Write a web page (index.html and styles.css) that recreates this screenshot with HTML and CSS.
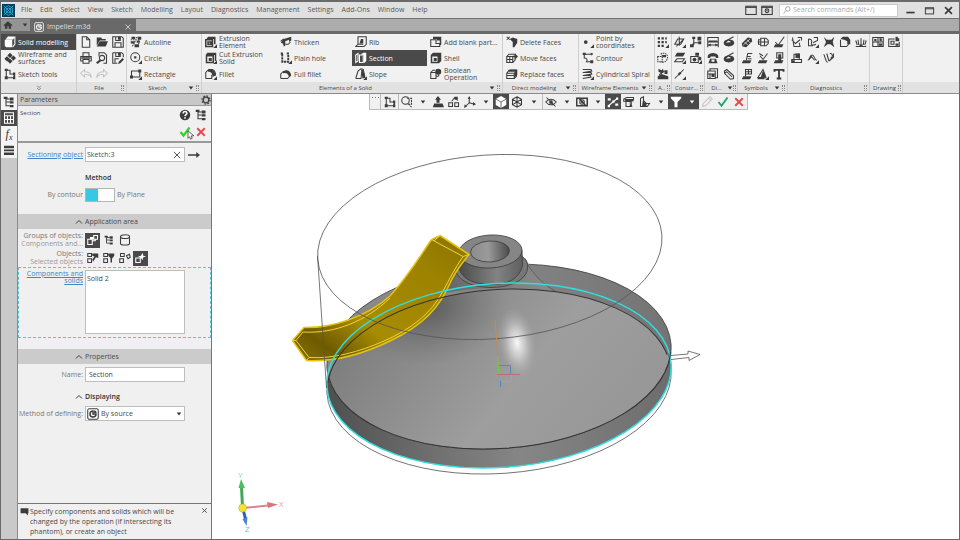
FILE: index.html
```html
<!DOCTYPE html>
<html lang="en">
<head>
<meta charset="utf-8">
<title>Impeller.m3d</title>
<link rel="stylesheet" href="styles.css">
</head>
<body>
<svg class="defs" aria-hidden="true">
  <symbol id="logo" viewBox="0 0 16 16"><rect class="logo-bg" width="16" height="16"/><path class="logo-line" d="M8 2l5 3v6l-5 3-5-3V5zM2 2l12 12M14 2L2 14M8 5a3 3 0 100 6 3 3 0 000-6z"/></symbol>
  <symbol id="home" viewBox="0 0 16 16"><path class="f" d="M1 8l7-6 7 6v1h-2v5h-4v-4H7v4H3V9H1z"/></symbol>
  <symbol id="doc" viewBox="0 0 16 16"><rect x="1" y="1" width="14" height="14" rx="2"/><path d="M8 4a4 4 0 104 4H8z" stroke-width="2"/><path class="f" d="M9.500 3v3.500H13A4 4 0 009.500 3z"/></symbol>
  <symbol id="caret" viewBox="0 0 8 8"><path class="f" d="M1 2h6L4 6z"/></symbol>
  <symbol id="x" viewBox="0 0 16 16"><path d="M3 3l10 10M13 3L3 13"/></symbol>
  <symbol id="check" viewBox="0 0 16 16"><path d="M2 8l4 5 8-11"/></symbol>
  <symbol id="win" viewBox="0 0 16 16"><rect x="1" y="3" width="14" height="11"/><path d="M1 4.500h14"/></symbol>
  <symbol id="wincam" viewBox="0 0 16 16"><rect x="1" y="3" width="14" height="11"/><path d="M1 4.500h14"/><circle cx="8" cy="9" r="2.500"/><circle class="f" cx="8" cy="9" r="1"/></symbol>
  <symbol id="max" viewBox="0 0 16 16"><rect x="2" y="4" width="12" height="9"/><path d="M2 5.500h12"/></symbol>
  <symbol id="min" viewBox="0 0 16 16"><path d="M2 11h12"/></symbol>
  <symbol id="search" viewBox="0 0 16 16"><circle cx="9.500" cy="6" r="4.500"/><path d="M6 9l-5 6"/></symbol>
  <symbol id="solid" viewBox="0 0 16 16"><path d="M5 1.500h9.500V11l-3 3.500"/><path class="f" d="M1 5h10v10H3l-2-2zM5 1l-3 3.500h10l2.500-3z"/></symbol>
  <symbol id="wire" viewBox="0 0 16 16"><path class="f" d="M8 1l3.500 3.500L8 8 4.500 4.500zM12.500 4.500L16 8l-3.500 3.500L9 8zM4 5.500L7.500 9 4 12.500.500 9zM8 9l3.500 3L8 15.500 4.500 12z"/></symbol>
  <symbol id="sk" viewBox="0 0 16 16"><path d="M3 2v11h11V8H8V3H3"/><path class="f" d="M1 1h4v3H1zM1 11h4v4H1zM12 6h3v4h-3zM12 11h3v4h-3z"/></symbol>
  <symbol id="more" viewBox="0 0 16 16"><path d="M3 2l5 5 5-5M3 8l5 5 5-5"/></symbol>
  <symbol id="new" viewBox="0 0 16 16"><path d="M3 1h6l4 4v10H3zM9 1v4h4"/></symbol>
  <symbol id="open" viewBox="0 0 16 16"><path class="f" d="M1 2h6l1 2h5v2H5l-4 7zM5 7h11l-3 7H1z"/></symbol>
  <symbol id="save" viewBox="0 0 16 16"><path d="M1 1h12l2 2v12H1zM4 15V9h8v6M5 1v5h6V1"/><path class="f" d="M8 1h3v4H8z"/></symbol>
  <symbol id="saveas" viewBox="0 0 16 16"><path d="M1 1h12l2 2v4M7 15H1V1M4 14V9h5M5 1v5h6V1"/><path class="f" d="M8 1h3v4H8zM8 16l1-3 5-5 2 2-5 5z"/></symbol>
  <symbol id="print" viewBox="0 0 16 16"><path d="M4 6V1h8v5M4 12H1V6h14v6h-3M4 10h8v5H4z"/><path class="f" d="M2 7h12v2H2z"/></symbol>
  <symbol id="preview" viewBox="0 0 16 16"><path d="M4 6V1h7l3 3v11h-4"/><circle cx="8" cy="8" r="3.500"/><path class="f" d="M5 10l2 2-5 4-2-2z"/></symbol>
  <symbol id="undo" viewBox="0 0 16 16"><path d="M6 2L1 7l5 5V9c5-1 8 1 9 4 0-6-4-8-9-8z"/></symbol>
  <symbol id="redo" viewBox="0 0 16 16"><path d="M10 2l5 5-5 5V9c-5-1-8 1-9 4 0-6 4-8 9-8z"/></symbol>
  <symbol id="autoline" viewBox="0 0 16 16"><path d="M1 5h7L3 14M8 2c4 1 5 4 3 12" stroke-dasharray="2 1"/><path class="f" d="M2 1h5v3H2zM10 1h5v4h-4zM1 7h5v3H1zM6 11h6v4H6zM9 6h4v3H9z"/></symbol>
  <symbol id="circle" viewBox="0 0 16 16"><circle cx="7" cy="7" r="6"/><path class="f" d="M5.500 5.500h3v3h-3zM16 11v5h-5z"/></symbol>
  <symbol id="rect" viewBox="0 0 16 16"><path d="M2 4h11v8H2z"/><path class="f" d="M11 2h4v4h-4zM0 10h4v4H0zM16 11v5h-5z"/></symbol>
  <symbol id="extr" viewBox="0 0 16 16"><path class="f" d="M4 1h10v10h-2V4H2z"/><path d="M1 5h9v9H1zM4 8h4v3H4z" stroke-width="2"/><path class="f" d="M16 11v5h-5z"/></symbol>
  <symbol id="cut" viewBox="0 0 16 16"><path class="f" fill-rule="evenodd" d="M3 1h12v11h-2V4H1zM1 4h11v11H1zM3 6v7h7V6z"/><path class="f" d="M5 8h4v4H5zM16 11v5h-5z"/></symbol>
  <symbol id="fillet" viewBox="0 0 16 16"><path d="M1 14V6l4-4h4c4 0 5 4 5 8M1 14h8V9"/><path class="f" d="M4 3c3-3 9-2 10 7l-4 2C10 8 9 5 4 5zM16 11v5h-5z"/></symbol>
  <symbol id="thick" viewBox="0 0 16 16"><path class="f" d="M5 4l10-3v5l-3 2V5L7 7v6l-2 1-1-4-3-1z"/><path d="M1 7l4-3M7 11h4l3-3"/></symbol>
  <symbol id="hole" viewBox="0 0 16 16"><path d="M1 2h4M9 2h4M3 3v10h8V3" stroke-width="2.500" stroke-dasharray="3 1"/><path class="f" d="M16 11v5h-5z"/></symbol>
  <symbol id="ffillet" viewBox="0 0 16 16"><path d="M1 14V8l4-4M1 14h9l4-4"/><path class="f" d="M4 5c4-4 10-2 11 5l-3 2C11 8 9 6 4 7z"/></symbol>
  <symbol id="rib" viewBox="0 0 16 16"><path d="M4 1h11v10l-3 3H1l3-3zM1 14h11M4 11h7"/><path class="f" d="M8 4h3v6H6z"/></symbol>
  <symbol id="section" viewBox="0 0 16 16"><path d="M1 4l3-2v10l-3 2zM6 4h5v10H6z"/><path class="f" d="M8 3l3-2h4v11l-3 3V4z"/></symbol>
  <symbol id="slope" viewBox="0 0 16 16"><path d="M1 14L4 4l4-3 3 1 2 9M1 14h7l1-9"/><path class="f" d="M8 2l3 1 3 10-4 1zM16 11v5h-5z"/></symbol>
  <symbol id="blank" viewBox="0 0 16 16"><path d="M1 5h7v5h5v4H1z"/><path class="f" d="M4 1h11v11h-2V6H9V4H4z"/></symbol>
  <symbol id="shell" viewBox="0 0 16 16"><path class="f" fill-rule="evenodd" d="M4 1h11v11l-3 3H1V4zM3 6v7h7V6z"/><path class="f" d="M5 8h4v4H5z"/></symbol>
  <symbol id="bool" viewBox="0 0 16 16"><path d="M1 6h7v8H1zM8 11h3l1-2M1 6l3-3h3"/><circle class="f" cx="11" cy="5" r="4"/></symbol>
  <symbol id="delf" viewBox="0 0 16 16"><path class="f" d="M5 4l4-2 6 2v5l-4 6H9V8z"/><path d="M1 1l4 4M5 1L1 5"/></symbol>
  <symbol id="movef" viewBox="0 0 16 16"><path d="M1 6h8v8H1zM1 10h8M5 6v8M1 6l3-3h8v8l-3 3"/><path class="f" d="M12 2l4 4-4 4V7H9V5h3z"/></symbol>
  <symbol id="repf" viewBox="0 0 16 16"><path d="M1 7h10v7H1zM1 10h10M1 7l3-4h10v8l-3 3"/><path class="f" d="M5 2h10v3H3zM11 6l4-3v6l-4 4z"/></symbol>
  <symbol id="point" viewBox="0 0 16 16"><circle class="f" cx="5" cy="8" r="2.500"/><path class="f" d="M16 11v5h-5z"/></symbol>
  <symbol id="contour" viewBox="0 0 16 16"><path d="M3 3h9M3 3v5c3 0 5 2 3 5h7"/><path class="f" d="M1 1h4v3H1zM11 1l4 1-2 3zM11 11h4v4h-4z"/></symbol>
  <symbol id="spiral" viewBox="0 0 16 16"><path d="M1 2h11l1 2-11 2M1 6h11l1 2-11 2M1 10h10l1 2-11 2"/><path class="f" d="M16 11v5h-5z"/></symbol>
  <symbol id="dots" viewBox="0 0 16 16"><path d="M1 3h12M1 8h12M1 13h9" stroke-width="3" stroke-dasharray="3 2"/><path class="f" d="M16 11v5h-5z"/></symbol>
  <symbol id="asel" viewBox="0 0 16 16"><path d="M5 3c4-3 9-1 9 4s-5 8-9 6" stroke-dasharray="2 1"/><path d="M1 6h6v7H1z" stroke-dasharray="2 1"/><path class="f" d="M6 4h6v3H8z"/></symbol>
  <symbol id="acog" viewBox="0 0 16 16"><path class="f" d="M2 1l4 2 2-2 1 4-3 2-4-2zM10 3h4v5h-4zM1 11l5-3 9 3v4H1z"/><path d="M3 9l7-5"/></symbol>
  <symbol id="plane" viewBox="0 0 16 16"><path d="M1 11l4-7h8l-4 7zM7 1v12M3 14L13 4"/><path class="f" d="M16 11v5h-5z"/></symbol>
  <symbol id="lcs" viewBox="0 0 16 16"><path d="M5 12V2M5 9h8M5 9l-3 5"/><path class="f" d="M10 1h5v5h-5zM3 1h4v3H3zM11 7h4v4h-4zM0 11h5v4H0z"/></symbol>
  <symbol id="offp" viewBox="0 0 16 16"><path class="f" d="M4 1h11l-3 5H1z"/><path d="M4 9h10l-3 4H1z"/><path class="f" d="M16 11v5h-5z"/></symbol>
  <symbol id="ccam" viewBox="0 0 16 16"><path d="M1 6h10v8H1z"/><circle class="f" cx="6" cy="10" r="2.500"/><path class="f" d="M7 1h5v5l3 1v4h-3V5H7zM16 11v5h-5z"/></symbol>
  <symbol id="axis" viewBox="0 0 16 16"><path d="M1 14L13 2"/><path class="f" d="M5 8l3-3 2 2-3 3zM16 11v5h-5z"/></symbol>
  <symbol id="dim" viewBox="0 0 16 16"><path d="M1 8v7M15 8v7M1 12h14M1 2h14v6H1z"/><path class="f" d="M1 12l4-2v4zM15 12l-4-2v4zM2 6h12v2H2z"/></symbol>
  <symbol id="disc" viewBox="0 0 16 16"><path class="f" fill-rule="evenodd" d="M1 9c0-6 14-6 14 0s-14 7-14 0zM4 9l7-1-4-2z"/><path d="M5 6l9-5"/></symbol>
  <symbol id="phone" viewBox="0 0 16 16"><path class="f" fill-rule="evenodd" d="M1 5c2-5 12-5 14 0v3h-3l-1-2H5L4 8H1zM4 9h8l2 6H2zM6 10v3h4v-3z"/></symbol>
  <symbol id="tbl" viewBox="0 0 16 16"><path d="M1 4h10v10H1zM4 4V1h10v12h-3M4 7v7M1 8h10"/><path class="f" d="M6 8h4v4H6z"/></symbol>
  <symbol id="clip" viewBox="0 0 16 16"><path d="M2 4l3-2 9 8v4l-4 1L2 7zM5 5l7 7M2 7l3-2"/></symbol>
  <symbol id="bolt" viewBox="0 0 16 16"><path class="f" d="M1 10l8-8 5 1 1 4-8 8-5-1z"/><path class="cutline" d="M5 8l4 4M8 5l4 4M3 12L12 4"/></symbol>
  <symbol id="nut" viewBox="0 0 16 16"><path d="M5 3h7l3 3v4l-3 3H5zM1 8h14M5 5H2v6h3M10 3v10"/></symbol>
  <symbol id="rough" viewBox="0 0 16 16"><path d="M3 8l4 4 8-11"/><path class="f" d="M3 11h11l-2 4H1z"/></symbol>
  <symbol id="base" viewBox="0 0 16 16"><path d="M7 11l2-9h6M8 6h5M9 9h5"/><path class="f" d="M3 11h11l-2 4H1z"/></symbol>
  <symbol id="mark" viewBox="0 0 16 16"><path d="M4 5l4 5 6-8M3 2l5 3"/><path class="f" d="M3 11h11l-2 4H1z"/></symbol>
  <symbol id="stamp" viewBox="0 0 16 16"><path d="M5 1h8v7H5z"/><path class="f" d="M7 3h4v8H7zM3 11h11l-2 4H1z"/></symbol>
  <symbol id="flag" viewBox="0 0 16 16"><path d="M6 11V2h8v6H6M10 2v6M6 5h8"/><path class="f" d="M3 11h11l-2 4H1z"/></symbol>
  <symbol id="tri" viewBox="0 0 16 16"><path d="M8 2L1 13h11zM8 5v6"/><path class="f" d="M7 6h3l2 6H5zM1 12h9v3H1zM16 11v5h-5z"/></symbol>
  <symbol id="T" viewBox="0 0 16 16"><path d="M2 5V2.500h12V5M8 2v11M5 14h6" stroke-width="2.500"/></symbol>
  <symbol id="d1" viewBox="0 0 16 16"><path d="M2 2l2 12h8l-1-5M1 5l5 5 6-5M9 2h5v4"/></symbol>
  <symbol id="d2" viewBox="0 0 16 16"><path d="M2 4c4 0 5 2 4 5s2 4 6 2M9 2h5v4L8 9M2 4v9h6"/><path class="f" d="M16 11v5h-5z"/></symbol>
  <symbol id="d3" viewBox="0 0 16 16"><path class="f" d="M1 1l4 4h6l4-4-2 7 2 7-5-4H6l-5 4 3-7z"/></symbol>
  <symbol id="d4" viewBox="0 0 16 16"><path d="M2 5v9h8l3-3"/><path class="f" d="M2 4l3-3h7l3 4v6h-4V7L7 5z"/></symbol>
  <symbol id="d5" viewBox="0 0 16 16"><path d="M1 14h14M3 12L1 6M13 12l2-6M8 11V3M5 12L4 5M11 12l1-7"/><path class="f" d="M6 11h4v3H6z"/></symbol>
  <symbol id="d6" viewBox="0 0 16 16"><path d="M1 10h13v4H1zM4 10V3h7v7"/><path class="f" d="M6 2h6v6H6zM1 11h4v3H1z"/></symbol>
  <symbol id="d7" viewBox="0 0 16 16"><path d="M1 11c3 0 2-7 6-7 3 0 2 6 6 7M3 10l3-4 4 5"/><path class="f" d="M16 11v5h-5z"/></symbol>
  <symbol id="d8" viewBox="0 0 16 16"><path d="M1 3c2 3 2 9 5 11M5 2c1 4 2 7 3 10M10 8a3 3 0 10-1-6M14 2v5l-6 5"/></symbol>
  <symbol id="dr1" viewBox="0 0 16 16"><path d="M1 2h14v12H1zM8 2v12M1 8h14"/><path class="f" d="M3 4h3v3H3zM10 3h3v4h-3zM9 10h5v3H9z"/></symbol>
  <symbol id="dr2" viewBox="0 0 16 16"><path d="M9 4H1v10h14V8M4 7h4v4H4z"/><path class="f" d="M10 1h3v2h2v4h-5zM10 10h4v3h-4z"/></symbol>
  <symbol id="tree" viewBox="0 0 16 16"><path d="M4 2v11h5M4 4h5M4 8h5"/><path class="f" d="M1 1h5v3H1zM9 2h5v4H9zM9 7h5v3H9zM9 12h5v3H9z"/></symbol>
  <symbol id="form" viewBox="0 0 16 16"><path d="M2 1h12v14H2zM2 5h12M6 5v10M2 10h12M10 5v10"/></symbol>
  <symbol id="bars" viewBox="0 0 16 16"><path class="f" d="M0 1h16v4H0zM0 7h16v3H0zM0 12h16v4H0z"/></symbol>
  <symbol id="gear" viewBox="0 0 16 16"><circle cx="8" cy="8" r="4.500" stroke-width="2"/><circle cx="8" cy="8" r="6.500" stroke-width="2" stroke-dasharray="2.500 2.600"/></symbol>
  <symbol id="help" viewBox="0 0 16 16"><circle class="f" cx="8" cy="8" r="7"/><path class="paper" d="M5.500 6c0-4 5.500-3.500 5 0-.3 1.500-2.500 1.500-2.500 3.500M8 11v2"/></symbol>
  <symbol id="arrow" viewBox="0 0 16 16"><path d="M0 8h13" stroke-width="2"/><path class="f" d="M11 4l5 4-5 4z"/></symbol>
  <symbol id="up" viewBox="0 0 16 16"><path d="M2 11l6-6 6 6"/></symbol>
  <symbol id="g1" viewBox="0 0 16 16"><path d="M1 7h6v7H1zM9 2h5v5H9zM7 9h4V7"/><path class="f" d="M4 4h5v3H4z"/></symbol>
  <symbol id="g3" viewBox="0 0 16 16"><ellipse cx="8" cy="3.500" rx="6" ry="2.500"/><path d="M2 3.500v9c0 3 12 3 12 0v-9"/></symbol>
  <symbol id="o1" viewBox="0 0 16 16"><path d="M1 9h5v5H1zM1 2h5v4H1z"/><path class="f" d="M7 2h8v6l-3-1-4 6-1-3 3-4-3-1z"/></symbol>
  <symbol id="o2" viewBox="0 0 16 16"><path d="M1 9h5v5H1zM1 2h5v4H1z"/><path class="f" d="M7 2h8v3l-3 4v5h-2V8L7 5z"/></symbol>
  <symbol id="o3" viewBox="0 0 16 16"><path d="M1 9h5v5H1zM2 2h5v4H2zM10 5l4-2 1 4-3 2z"/></symbol>
  <symbol id="o4" viewBox="0 0 16 16"><path d="M1 8h6v6H1z"/><path class="f" d="M10 1l1 4 4 1-4 1-1 4-2-3-4-2 4-1z"/></symbol>
  <symbol id="chat" viewBox="0 0 16 16"><path class="f" d="M1 2h14v9h-1v4l-4-4H1z"/></symbol>
  <symbol id="zoomf" viewBox="0 0 16 16"><circle cx="6" cy="6" r="5"/><path d="M8 3h6v8H9M10 10l4 5" stroke-dasharray="3 1"/></symbol>
  <symbol id="norm" viewBox="0 0 16 16"><path class="f" d="M8 0l4 5h-2v4H6V5H4zM3 10h11l2 5H1z"/></symbol>
  <symbol id="orient" viewBox="0 0 16 16"><path d="M1 9h5v5H1zM9 9h5v5H9zM5 7l4-5 4 4"/><path class="f" d="M9 1h4v4H9z"/></symbol>
  <symbol id="triad" viewBox="0 0 16 16"><path d="M7 9V2M7 9l7 2M7 9l-5 5"/><path class="f" d="M5 4l2-4 2 4zM12 8l4 3-4 2zM1 11l3 3-4 2z"/></symbol>
  <symbol id="cube" viewBox="0 0 16 16"><path class="f" d="M8 0l7 4v8l-7 4-7-4V4z"/><path class="darkline" d="M1 4l7 4 7-4M8 8v8"/></symbol>
  <symbol id="wcube" viewBox="0 0 16 16"><path d="M8 1l6 3.500v7L8 15l-6-3.500v-7zM2 4.500L8 8l6-3.500M8 8v7M8 1v7l6 3.500M8 8l-6 3.500"/></symbol>
  <symbol id="eye" viewBox="0 0 16 16"><path d="M1 8c4-5 10-5 14 0-4 5-10 5-14 0zM2 2l12 12"/><circle class="f" cx="8" cy="8" r="2.500"/></symbol>
  <symbol id="eyebox" viewBox="0 0 16 16"><path d="M1 3h14v10H1zM3 2l11 12" stroke-width="2"/><circle cx="8" cy="8" r="3"/><circle class="f" cx="8" cy="8" r="1.500"/></symbol>
  <symbol id="snap" viewBox="0 0 16 16"><path d="M2 13L14 3"/><path class="f" d="M1 3h4v3H1zM7 6h3v3H7zM11 10h4v3h-4zM1 12h3v3H1zM12 2h3v3h-3z"/></symbol>
  <symbol id="hid" viewBox="0 0 16 16"><path d="M1 4l4-2h9v3L9 7H1zM4 7v7h7V8"/><path class="f" d="M2 4h12v3l-4 1v3l3 3H9V8H4z"/></symbol>
  <symbol id="lay" viewBox="0 0 16 16"><path d="M2 14V3l4-2v9h8l-3 4zM6 6l4 4"/><path class="f" d="M5 7l5 3v4H4z"/></symbol>
  <symbol id="filter" viewBox="0 0 16 16"><path class="f" d="M1 1h14v2l-5 5v7H6V8L1 3z"/></symbol>
  <symbol id="pip" viewBox="0 0 16 16"><path d="M2 14l1-4 7-7 3 3-7 7zM10 3l2-2 3 3-2 2"/></symbol>
</svg>

<div class="app">
  <header class="titlebar">
    <svg class="logo"><use href="#logo"/></svg>
    <nav class="menu" aria-label="Main menu">
      <a href="#">File</a><a href="#">Edit</a><a href="#">Select</a><a href="#">View</a><a href="#">Sketch</a><a href="#">Modelling</a><a href="#">Layout</a><a href="#">Diagnostics</a><a href="#">Management</a><a href="#">Settings</a><a href="#">Add-Ons</a><a href="#">Window</a><a href="#">Help</a>
    </nav>
    <button class="winbtn" aria-label="Window layout"><svg class="ic"><use href="#win"/></svg></button>
    <button class="winbtn" aria-label="Screen view"><svg class="ic"><use href="#wincam"/></svg></button>
    <label class="search"><svg class="ic"><use href="#search"/></svg><input type="text" placeholder="Search commands (Alt+/)" aria-label="Search commands"></label>
    <div class="wincontrols">
      <button aria-label="Minimize"><svg class="ic bold"><use href="#min"/></svg></button>
      <button aria-label="Maximize"><svg class="ic"><use href="#max"/></svg></button>
      <button aria-label="Close"><svg class="ic bold small"><use href="#x"/></svg></button>
    </div>
  </header>

  <div class="tabs">
    <button class="homebtn" aria-label="Home"><svg class="ic"><use href="#home"/></svg><svg class="caret"><use href="#caret"/></svg></button>
    <div class="tab"><svg class="ic"><use href="#doc"/></svg><span>Impeller.m3d</span><button aria-label="Close tab"><svg class="ic small"><use href="#x"/></svg></button></div>
  </div>

  <div class="ribbon">
    <section class="group modes">
      <div class="cmds">
        <button class="cmd on"><svg class="ic"><use href="#solid"/></svg><span>Solid modelling</span></button>
        <button class="cmd"><svg class="ic"><use href="#wire"/></svg><span>Wireframe and surfaces</span></button>
        <button class="cmd"><svg class="ic"><use href="#sk"/></svg><span>Sketch tools</span></button>
      </div>
      <footer><svg class="ic more"><use href="#more"/></svg></footer>
    </section>
    <section class="group file">
      <div class="tools c3">
        <button aria-label="New"><svg class="ic"><use href="#new"/></svg></button><button aria-label="Open"><svg class="ic"><use href="#open"/></svg></button><button aria-label="Save"><svg class="ic"><use href="#save"/></svg></button>
        <button aria-label="Print"><svg class="ic"><use href="#print"/></svg></button><button aria-label="Preview"><svg class="ic"><use href="#preview"/></svg></button><button aria-label="Save as"><svg class="ic"><use href="#saveas"/></svg></button>
        <button aria-label="Undo" disabled><svg class="ic"><use href="#undo"/></svg></button><button aria-label="Redo" disabled><svg class="ic"><use href="#redo"/></svg></button>
      </div>
      <footer><span>File</span><i class="grip"></i></footer>
    </section>
    <section class="group sketch">
      <div class="cmds">
        <button class="cmd"><svg class="ic"><use href="#autoline"/></svg><span>Autoline</span></button>
        <button class="cmd"><svg class="ic"><use href="#circle"/></svg><span>Circle</span></button>
        <button class="cmd"><svg class="ic"><use href="#rect"/></svg><span>Rectangle</span></button>
      </div>
      <footer><span>Sketch</span><svg class="caret"><use href="#caret"/></svg><i class="grip"></i></footer>
    </section>
    <section class="group elements">
      <div class="cmds c4">
        <button class="cmd"><svg class="ic"><use href="#extr"/></svg><span>Extrusion Element</span></button>
        <button class="cmd"><svg class="ic"><use href="#cut"/></svg><span>Cut Extrusion Solid</span></button>
        <button class="cmd"><svg class="ic"><use href="#fillet"/></svg><span>Fillet</span></button>
        <button class="cmd"><svg class="ic"><use href="#thick"/></svg><span>Thicken</span></button>
        <button class="cmd"><svg class="ic"><use href="#hole"/></svg><span>Plain hole</span></button>
        <button class="cmd"><svg class="ic"><use href="#ffillet"/></svg><span>Full fillet</span></button>
        <button class="cmd"><svg class="ic"><use href="#rib"/></svg><span>Rib</span></button>
        <button class="cmd on"><svg class="ic"><use href="#section"/></svg><span>Section</span></button>
        <button class="cmd"><svg class="ic"><use href="#slope"/></svg><span>Slope</span></button>
        <button class="cmd"><svg class="ic"><use href="#blank"/></svg><span>Add blank part...</span></button>
        <button class="cmd"><svg class="ic"><use href="#shell"/></svg><span>Shell</span></button>
        <button class="cmd"><svg class="ic"><use href="#bool"/></svg><span>Boolean<br>Operation</span></button>
      </div>
      <footer><span>Elements of a Solid</span><svg class="caret"><use href="#caret"/></svg><i class="grip"></i></footer>
    </section>
    <section class="group direct">
      <div class="cmds">
        <button class="cmd"><svg class="ic"><use href="#delf"/></svg><span>Delete Faces</span></button>
        <button class="cmd"><svg class="ic"><use href="#movef"/></svg><span>Move faces</span></button>
        <button class="cmd"><svg class="ic"><use href="#repf"/></svg><span>Replace faces</span></button>
      </div>
      <footer><span>Direct modeling</span><svg class="caret"><use href="#caret"/></svg><i class="grip"></i></footer>
    </section>
    <section class="group wireel">
      <div class="cmds">
        <button class="cmd"><svg class="ic"><use href="#point"/></svg><span>Point by coordinates</span></button>
        <button class="cmd"><svg class="ic"><use href="#contour"/></svg><span>Contour</span></button>
        <button class="cmd"><svg class="ic"><use href="#spiral"/></svg><span>Cylindrical Spiral</span></button>
      </div>
      <footer><span>Wireframe Elements</span><svg class="caret"><use href="#caret"/></svg><i class="grip"></i></footer>
    </section>
    <section class="group arr">
      <div class="tools">
        <button aria-label="Pattern"><svg class="ic"><use href="#dots"/></svg></button><button aria-label="Copy"><svg class="ic"><use href="#asel"/></svg></button><button aria-label="Geometry"><svg class="ic"><use href="#acog"/></svg></button>
      </div>
      <footer><span>A..</span><i class="grip"></i></footer>
    </section>
    <section class="group constr">
      <div class="tools c2">
        <button aria-label="Plane"><svg class="ic"><use href="#plane"/></svg></button><button aria-label="Local axes"><svg class="ic"><use href="#lcs"/></svg></button>
        <button aria-label="Offset plane"><svg class="ic"><use href="#offp"/></svg></button><button aria-label="Control point"><svg class="ic"><use href="#ccam"/></svg></button>
        <button aria-label="Axis"><svg class="ic"><use href="#axis"/></svg></button>
      </div>
      <footer><span>Constr...</span><i class="grip"></i></footer>
    </section>
    <section class="group dims">
      <div class="tools c2">
        <button aria-label="Linear"><svg class="ic"><use href="#dim"/></svg></button><button aria-label="Radial"><svg class="ic"><use href="#disc"/></svg></button>
        <button aria-label="Angular"><svg class="ic"><use href="#phone"/></svg></button><button aria-label="Diameter"><svg class="ic"><use href="#disc"/></svg></button>
        <button aria-label="Table"><svg class="ic"><use href="#tbl"/></svg></button><button aria-label="Attach"><svg class="ic"><use href="#clip"/></svg></button>
      </div>
      <footer><span>Di...</span><svg class="caret"><use href="#caret"/></svg><i class="grip"></i></footer>
    </section>
    <section class="group symbols">
      <div class="tools c3">
        <button aria-label="Thread"><svg class="ic"><use href="#bolt"/></svg></button><button aria-label="Nut"><svg class="ic"><use href="#nut"/></svg></button><button aria-label="Roughness"><svg class="ic"><use href="#rough"/></svg></button>
        <button aria-label="Base"><svg class="ic"><use href="#base"/></svg></button><button aria-label="Mark"><svg class="ic"><use href="#mark"/></svg></button><button aria-label="Stamp"><svg class="ic"><use href="#stamp"/></svg></button>
        <button aria-label="Tolerance"><svg class="ic"><use href="#flag"/></svg></button><button aria-label="Position"><svg class="ic"><use href="#tri"/></svg></button><button aria-label="Text"><svg class="ic"><use href="#T"/></svg></button>
      </div>
      <footer><span>Symbols</span><svg class="caret"><use href="#caret"/></svg><i class="grip"></i></footer>
    </section>
    <section class="group diag">
      <div class="tools c5">
        <button aria-label="Measure"><svg class="ic"><use href="#d1"/></svg></button><button aria-label="Curve check"><svg class="ic"><use href="#d2"/></svg></button><button aria-label="Collisions"><svg class="ic"><use href="#d3"/></svg></button><button aria-label="Deviation"><svg class="ic"><use href="#d4"/></svg></button><button aria-label="Normals"><svg class="ic"><use href="#d5"/></svg></button>
        <button aria-label="Mass"><svg class="ic"><use href="#d6"/></svg></button><button aria-label="Curvature"><svg class="ic"><use href="#d7"/></svg></button><button aria-label="Smoothness"><svg class="ic"><use href="#d8"/></svg></button>
      </div>
      <footer><span>Diagnostics</span><i class="grip"></i></footer>
    </section>
    <section class="group drawing">
      <div class="tools c2">
        <button aria-label="Create drawing"><svg class="ic"><use href="#dr1"/></svg></button><button aria-label="Update drawing"><svg class="ic"><use href="#dr2"/></svg></button>
      </div>
      <footer><span>Drawing</span><i class="grip"></i></footer>
    </section>
    <div class="rest"></div>
  </div>

  <div class="work">
    <nav class="rail" aria-label="Panels">
      <button aria-label="Tree"><svg class="ic"><use href="#tree"/></svg></button>
      <button class="on" aria-label="Parameters"><svg class="ic"><use href="#form"/></svg></button>
      <button class="fx" aria-label="Variables">f<sub>x</sub></button>
      <button aria-label="Layers"><svg class="ic small"><use href="#bars"/></svg></button>
    </nav>

    <aside class="panel">
      <div class="phead"><span>Parameters</span><button aria-label="Panel settings"><svg class="ic small"><use href="#gear"/></svg></button></div>
      <div class="pop">
        <span>Section</span>
        <div class="actions">
          <button aria-label="Help"><svg class="ic"><use href="#help"/></svg></button><button aria-label="Structure"><svg class="ic"><use href="#tree"/></svg></button>
          <button class="ok" aria-label="Apply"><svg class="ic"><use href="#check"/></svg><svg class="cursor" viewBox="0 0 8 12"><path d="M1 1v9l2-2 1 3 2-1-1-3h3z"/></svg></button><button class="no" aria-label="Cancel"><svg class="ic"><use href="#x"/></svg></button>
        </div>
      </div>
      <form class="params">
        <div class="row first">
          <label class="link" for="so">Sectioning object</label>
          <div class="field"><input id="so" type="text" value="Sketch:3"><button type="button" aria-label="Clear"><svg class="ic small"><use href="#x"/></svg></button></div>
          <button type="button" class="bare" aria-label="Direction"><svg class="ic"><use href="#arrow"/></svg></button>
        </div>
        <h3 class="method">Method</h3>
        <div class="row">
          <label for="mode">By contour</label>
          <div class="switch"><input id="mode" type="checkbox"><span>By Plane</span></div>
        </div>
        <h2 class="area"><svg class="ic tiny"><use href="#up"/></svg>Application area</h2>
        <div class="row opts">
          <div class="two">Groups of objects:<br><span>Components and...</span></div>
          <div class="set"><button type="button" class="on" aria-label="Components"><svg class="ic"><use href="#g1"/></svg></button><button type="button" aria-label="Tree"><svg class="ic small"><use href="#tree"/></svg></button><button type="button" aria-label="Bodies"><svg class="ic"><use href="#g3"/></svg></button></div>
        </div>
        <div class="row opts">
          <div class="two">Objects:<br><span>Selected objects</span></div>
          <div class="set"><button type="button" aria-label="All"><svg class="ic"><use href="#o1"/></svg></button><button type="button" aria-label="Filtered"><svg class="ic"><use href="#o2"/></svg></button><button type="button" aria-label="Except"><svg class="ic"><use href="#o3"/></svg></button><button type="button" class="on" aria-label="Selected"><svg class="ic"><use href="#o4"/></svg></button></div>
        </div>
        <div class="row picked">
          <label class="link" for="cs">Components and solids</label>
          <textarea id="cs">Solid 2</textarea>
        </div>
        <h2><svg class="ic tiny"><use href="#up"/></svg>Properties</h2>
        <div class="row name">
          <label for="nm">Name:</label>
          <div class="field"><input id="nm" type="text" value="Section"></div>
        </div>
        <h3 class="disp"><svg class="ic tiny"><use href="#up"/></svg>Displaying</h3>
        <div class="row">
          <label for="md">Method of defining:</label>
          <div class="field"><svg class="ic"><use href="#doc"/></svg><select id="md"><option>By source</option></select><svg class="caret"><use href="#caret"/></svg></div>
        </div>
      </form>
      <div class="hint"><svg class="ic"><use href="#chat"/></svg><p>Specify components and solids which will be changed by the operation (if intersecting its phantom), or create an object</p><button aria-label="Close hint"><svg class="ic tiny"><use href="#x"/></svg></button></div>
    </aside>

    <main class="view">
      <div class="toolbar">
        <span class="handle"></span>
        <button class="sep" aria-label="Sketch"><svg class="ic"><use href="#sk"/></svg></button>
        <button aria-label="Zoom"><svg class="ic"><use href="#zoomf"/></svg></button><button class="dd" aria-label="Zoom options"><svg class="caret"><use href="#caret"/></svg></button>
        <button aria-label="Normal to"><svg class="ic"><use href="#norm"/></svg></button><button aria-label="Rotate"><svg class="ic"><use href="#orient"/></svg></button><button aria-label="Orientation"><svg class="ic"><use href="#triad"/></svg></button><button class="dd" aria-label="Orientation options"><svg class="caret"><use href="#caret"/></svg></button>
        <button class="on" aria-label="Shaded"><svg class="ic"><use href="#cube"/></svg></button><button aria-label="Wireframe"><svg class="ic"><use href="#wcube"/></svg></button><button class="dd sep" aria-label="Display options"><svg class="caret"><use href="#caret"/></svg></button>
        <button aria-label="Hide"><svg class="ic"><use href="#eye"/></svg></button><button class="dd" aria-label="Hide options"><svg class="caret"><use href="#caret"/></svg></button>
        <button aria-label="Hide all"><svg class="ic"><use href="#eyebox"/></svg></button><button class="dd" aria-label="Hide all options"><svg class="caret"><use href="#caret"/></svg></button>
        <button class="on" aria-label="Snap"><svg class="ic"><use href="#snap"/></svg></button><button aria-label="Simplify"><svg class="ic"><use href="#hid"/></svg></button><button aria-label="Layers"><svg class="ic"><use href="#lay"/></svg></button><button class="dd" aria-label="Layer options"><svg class="caret"><use href="#caret"/></svg></button>
        <button class="on" aria-label="Filter"><svg class="ic"><use href="#filter"/></svg></button><button class="dd on" aria-label="Filter options"><svg class="caret"><use href="#caret"/></svg></button>
        <button disabled aria-label="Pick"><svg class="ic"><use href="#pip"/></svg></button><button class="apply" aria-label="Finish"><svg class="ic"><use href="#check"/></svg></button><button class="no" aria-label="Cancel"><svg class="ic"><use href="#x"/></svg></button>
      </div>
      <svg class="scene" viewBox="212 110 747 428" preserveAspectRatio="xMinYMin meet" role="img" aria-label="Impeller model">
        <defs>
          <linearGradient id="gRim" x1="0" x2="1"><stop offset="0" stop-color="#505050"/><stop offset=".3" stop-color="#707070"/><stop offset=".55" stop-color="#868686"/><stop offset="1" stop-color="#6c6c6c"/></linearGradient>
          <linearGradient id="gDish" x1="0" y1="0" x2="1" y2=".5"><stop offset="0" stop-color="#747474"/><stop offset=".4" stop-color="#8e8e8e"/><stop offset=".65" stop-color="#9e9e9e"/><stop offset="1" stop-color="#979797"/></linearGradient>
          <linearGradient id="gBack" x1="0" x2="1"><stop offset="0" stop-color="#8a8a8a"/><stop offset=".5" stop-color="#868686"/><stop offset="1" stop-color="#747474"/></linearGradient>
          <linearGradient id="gHub" x1="0" x2="1"><stop offset="0" stop-color="#4c4c4c"/><stop offset=".6" stop-color="#838383"/><stop offset="1" stop-color="#5e5e5e"/></linearGradient>
          <linearGradient id="gHole" x1="0" x2="1"><stop offset="0" stop-color="#8c8c8c"/><stop offset=".45" stop-color="#9a9a9a"/><stop offset="1" stop-color="#4a4a4a"/></linearGradient>
          <linearGradient id="gCone" x1="0" x2="1"><stop offset="0" stop-color="#5a5a5a"/><stop offset=".5" stop-color="#7c7c7c"/><stop offset="1" stop-color="#8a8a8a"/></linearGradient>
          <linearGradient id="gBlade" x1="0" y1="1" x2="1" y2="0"><stop offset="0" stop-color="#8a7200"/><stop offset=".15" stop-color="#6e5b00"/><stop offset=".35" stop-color="#a88c00"/><stop offset=".75" stop-color="#9c8200"/><stop offset="1" stop-color="#8a7300"/></linearGradient>
          <radialGradient id="gSpot"><stop offset="0" stop-color="#fff" stop-opacity=".95"/><stop offset=".4" stop-color="#e8e8e8" stop-opacity=".6"/><stop offset="1" stop-color="#aaa" stop-opacity="0"/></radialGradient>
          <radialGradient id="gShade"><stop offset="0" stop-color="#333" stop-opacity=".55"/><stop offset="1" stop-color="#555" stop-opacity="0"/></radialGradient>
          <clipPath id="cDish"><ellipse cx="499" cy="356.500" rx="172.500" ry="92" transform="rotate(-4 499 356.500)"/></clipPath>
          <clipPath id="cFront"><ellipse cx="499" cy="381.500" rx="172.500" ry="92" transform="rotate(-4 499 381.500)"/></clipPath>
          <clipPath id="cUpper"><path d="M300 140H700V352L300 385z"/></clipPath>
          <clipPath id="cLower"><path d="M300 380L700 350V500H300z"/></clipPath>
        </defs>
        <ellipse class="edge thin" cx="499" cy="381.500" rx="172.500" ry="92" transform="rotate(-4 499 381.500)"/>
        <path fill="url(#gRim)" d="M327 365H671.500V366H327z"/>
        <ellipse fill="url(#gRim)" cx="499" cy="375.500" rx="172.500" ry="92" transform="rotate(-4 499 375.500)"/>
        <ellipse fill="url(#gBack)" class="edged" cx="499" cy="356.500" rx="172.500" ry="92" transform="rotate(-4 499 356.500)"/>
        <g clip-path="url(#cDish)"><ellipse fill="url(#gDish)" cx="499" cy="381.500" rx="172.500" ry="92" transform="rotate(-4 499 381.500)"/>
          <g clip-path="url(#cFront)"><ellipse cx="425" cy="305" rx="85" ry="60" fill="url(#gShade)"/></g></g>
        <path fill="url(#gCone)" d="M462 262C452 280 438 288 424 298C460 286 510 287 553 291C541 281 533 273 525 258z"/>
        <path class="edge thin" d="M528 265C536 277 544 285 555 291"/>
        <ellipse cx="517" cy="343" rx="19" ry="36" fill="url(#gSpot)" transform="rotate(-8 517 343)"/>
        <path class="edged" fill="#777" d="M459 256C450 264 453 287 491 287.500C522 287 532 272 526 260L522 256z"/>
        <path class="edged" fill="url(#gHub)" d="M459 252V268C462 280 475 284 491 284.500S519 279 522.500 266L522 250z"/>
        <ellipse class="edged" fill="#858585" cx="490.500" cy="251.500" rx="31.500" ry="16.500" transform="rotate(-3 490.500 251.500)"/>
        <ellipse class="edged" fill="url(#gHole)" cx="490" cy="251.500" rx="19.500" ry="10.500" transform="rotate(-3 490 251.500)"/>
        <path fill="url(#gBlade)" class="blade" d="M440 235.500L469 254.500C463 262 457 269 451 281C440 307 424 325 390 341C363 354 333 362 306.500 360.500L292.500 340.500L304 327.500C331 328 365 318 390 296C409 275 420 256 431.500 239.500z"/>
        <path class="bladein" d="M431.500 239.500L463 256.500L469 254.500M434 241L440 235.500M463 256.500C455 268 449 280 443 291C431 314 411 329 384 341C359 352 333 359 309 357.500L296 340.500L303 332C335 334 366 321 390 298M296 340.500L292.500 340.500M309 357.500L306.500 360.500"/>
        <ellipse class="cyan" cx="499" cy="375.500" rx="172.500" ry="92" transform="rotate(-4 499 375.500)"/>
        <g clip-path="url(#cUpper)"><ellipse class="edge" cx="499" cy="381.500" rx="172" ry="92" transform="rotate(-4 499 381.500)"/></g>
        <g clip-path="url(#cLower)"><ellipse class="edge" cx="499" cy="356.500" rx="172" ry="92" transform="rotate(-4 499 356.500)"/></g>
        <ellipse class="edge thin" cx="489.800" cy="247" rx="172.500" ry="92" transform="rotate(-4 489.800 247)"/>
        <path class="edge thin" d="M317.500 256L326.500 388M671 355.500L688 354V351L700 354.500L689 360.500V357.500L671 359.500"/>
        <path d="M495 320L498 358" stroke="#c78a52"/><path d="M497.500 356L499 375M502 381.500H511.500V375" stroke="#69d52e" fill="none"/><path d="M499 365.500H510.500V374M500.500 381V387" stroke="#5a86bd" fill="none"/><path d="M497 374.500H520" stroke="#b87070"/>
        <g class="axes">
          <path d="M242.500 507L241.500 487" stroke="#43a957" stroke-width="3"/><path d="M238.500 488L241 479L245 488z" fill="#4dbd62"/>
          <path d="M243 508L268 505.500" stroke="#d9858b" stroke-width="2"/><path d="M267 502L278 504.500L268 508z" fill="#d8747a"/>
          <path d="M243 509L245.500 519" stroke="#315ca8" stroke-width="3"/><path d="M242.500 519L247.500 517L246.500 526z" fill="#4a7fe0"/>
          <circle cx="242.700" cy="508" r="4" fill="#f0e43c" stroke="#b8a820" stroke-width=".5"/>
          <text x="238" y="478" fill="#8fd09b">Y</text><text x="279" y="507" fill="#e0a0a4">X</text><text x="245" y="532" fill="#8db0e8">Z</text>
        </g>
      </svg>
    </main>
  </div>
</div>
</body>
</html>
```
FILE: styles.css
```css
* { box-sizing: border-box; }
body { margin: 0; font: 7px/8px "Open Sans", "Noto Sans", sans-serif; color: #484848; background: #fff; }
button, input, select, textarea { font: inherit; color: inherit; background: none; border: 0; padding: 0; margin: 0; border-radius: 0; }
button { display: flex; align-items: center; justify-content: center; }
h2, h3, p { margin: 0; font: inherit; }
.defs { position: absolute; width: 0; height: 0; }

.ic { width: 12px; height: 12px; flex: none; fill: none; stroke: currentColor; stroke-width: 1.4; color: #3c3c3c; }
.ic.small { width: 10px; height: 10px; }
.ic.tiny { width: 8px; height: 8px; stroke-width: 2; }
.ic.more { width: 6px; height: 6px; }
.ic.bold { stroke-width: 2.5; }
.f { fill: currentColor; stroke: none; }
.paper { stroke: #fff; stroke-width: 2; }
.cutline { stroke: #f2f2f2; stroke-width: 1; }
.darkline { stroke: #444; stroke-width: 1; }
.caret { width: 6px; height: 6px; flex: none; color: #333; }
.on, .on .ic, .on .caret { color: #fff; }
.on { background: #4a4a4a; }
:disabled .ic { color: #c4c4c4; }

.app { display: flex; flex-direction: column; min-height: 100vh; border: 1px solid #6a6a6a; border-top-width: 2px; }

.titlebar { display: flex; align-items: center; height: 16px; background: #e0e0e0; }
.logo { width: 13px; height: 13px; margin: 0 6px 0 1px; }
.logo-bg { fill: #0c3a54; }
.logo-line { fill: none; stroke: #2ea3d6; stroke-width: 1.2; }
.menu { display: flex; flex: 1; gap: 8px; }
.menu a { color: #585858; text-decoration: none; }
.winbtn { margin-right: 4px; }
.search { display: flex; align-items: center; gap: 2px; width: 119px; height: 13px; padding-left: 3px; background: #fff; border: 1px solid #cacaca; margin-left: 2px; }
.search .ic { width: 8px; height: 8px; color: #888; }
.search input { flex: 1; min-width: 0; }
.search input::placeholder { color: #aaa; }
.wincontrols { display: flex; gap: 8px; padding: 0 5px 0 7px; }
.wincontrols .ic { width: 11px; height: 11px; }

.tabs { display: flex; height: 16px; background: #acacac; border-top: 1px solid #747474; border-bottom: 3px solid #696969; }
.homebtn { gap: 9px; width: 29px; background: #949494; }
.homebtn .ic { width: 10px; height: 10px; }
.tab { display: flex; align-items: center; gap: 3px; width: 106px; height: 15px; padding: 0 4px; background: #696969; color: #ddd; }
.tab .ic { color: #eee; width: 10px; height: 10px; }
.tab .ic.small { width: 8px; height: 8px; }
.tab span { flex: 1; }

.ribbon { display: flex; background: #f1f1f1; border-bottom: 1px solid #8a8a8a; }
.group { display: flex; flex-direction: column; border-right: 1px solid #cfcfcf; }
.group footer, .rest::after { display: flex; align-items: center; justify-content: center; height: 11px; background: #e2e2e2; gap: 2px; padding: 0 2px; white-space: nowrap; font-size: 6px; }
.group footer span { flex: 1; text-align: center; }
.rest { flex: 1; display: flex; flex-direction: column; justify-content: flex-end; }
.rest::after { content: ""; }
.grip { width: 3px; height: 6px; border: 1px dotted #888; border-width: 0 1px; }
.cmds { display: grid; grid-template-rows: repeat(3, 16px); grid-auto-flow: column; grid-auto-columns: 1fr; height: 48px; }
.cmd { justify-content: flex-start; gap: 2px; padding: 0 0 0 3px; text-align: left; line-height: 7px; }
.tools { display: grid; grid-template: repeat(3, 16px) / repeat(1, 16px); height: 48px; justify-content: center; }
.c2 { grid-template-columns: repeat(2, 16px); }
.c3 { grid-template-columns: repeat(3, 16px); }
.c5 { grid-template-columns: repeat(5, 16px); }
.modes { width: 76px; }
.file { width: 50px; }
.sketch { width: 75px; }
.elements { width: 301px; }
.direct, .wireel { width: 76px; }
.arr { width: 17px; }
.constr, .dims, .drawing { width: 33px; }
.symbols { width: 50px; }
.diag { width: 82px; }
.arr footer, .constr footer, .dims footer, .drawing footer { gap: 0; padding: 0 1px; }

.work { display: flex; flex: 1; }
.rail { width: 17px; background: #c9c9c9; border-right: 1px solid #8a8a8a; }
.rail button { width: 16px; height: 16px; background: #f4f4f4; }
.rail .on { background: #4a4a4a; }
.rail .fx { font: italic 12px/14px "Liberation Serif", serif; color: #333; }
.fx sub { font-size: 8px; line-height: 8px; align-self: flex-end; }

.panel { display: flex; flex-direction: column; width: 194px; background: #f0f0f0; border-right: 1px solid #777; }
.phead { display: flex; align-items: center; justify-content: space-between; height: 12px; padding: 0 0 0 2px; background: #c8c8c8; border-bottom: 1px solid #999; }
.pop { display: flex; justify-content: space-between; height: 37px; padding: 0 2px; border-bottom: 2px solid #999; }
.pop > span { padding-top: 3px; font-size: 6px; }
.actions { display: grid; grid-template: repeat(2, 17px) / repeat(2, 16px); align-content: start; }
.actions button { position: relative; }
.ok .ic { color: #2bd92b; stroke-width: 3; }
.no .ic { color: #e34a4a; stroke-width: 2.5; }
.apply .ic { color: #1fa36c; stroke-width: 2.5; }
.cursor { position: absolute; left: 10px; top: 7px; width: 7px; height: 10px; fill: #fff; stroke: #444; }

.params { display: flex; flex-direction: column; flex: 1; color: #777; }
.row { display: grid; grid-template-columns: 65px 100px 1fr; column-gap: 2px; align-items: center; min-height: 15px; }
.row label, .two { text-align: right; white-space: nowrap; }
.link { color: #4385c4; text-decoration: underline; }
.row .link { margin-left: 4px; }
.first { margin-top: 4px; }
.field { display: flex; align-items: center; height: 15px; padding: 0 2px 0 1px; background: #fff; border: 1px solid #bdbdbd; color: #484848; }
.field input, .field select { flex: 1; min-width: 0; height: 13px; }
.field select { appearance: none; padding-left: 2px; }
.name .field input { padding-left: 2px; }
.bare { justify-self: start; margin-left: 1px; }
h2, h3 { display: flex; align-items: center; gap: 2px; color: #484848; }
h3 { font-weight: 600; color: #333; }
h2 { height: 15px; padding-left: 57px; background: #cbcbcb; }
.method { padding-left: 67px; margin: 12px 0 5px; height: 8px; }
.switch { display: flex; align-items: center; gap: 2px; white-space: nowrap; }
.switch input { appearance: none; width: 30px; height: 14px; background: linear-gradient(90deg, #37c8e4 12px, #fff 12px); border: 1px solid #b5b5b5; }
.area { margin: 12px 0 2px; }
.opts { min-height: 18px; }
.two { color: #777; }
.two span { color: #999; }
.set { display: flex; gap: 1px; }
.set button { width: 15px; height: 15px; }
.picked { align-items: start; padding: 2px 0 3px; margin-bottom: 11px; border: 1px dashed #55c6d4; }
.picked .link { white-space: normal; line-height: 7px; }
.picked.row { grid-template-columns: 64px 100px 1fr; }
.picked textarea { height: 64px; padding: 4px 1px; background: #fff; border: 1px solid #bdbdbd; resize: none; color: #484848; }
.name { margin-top: 3px; }
.disp { padding-left: 57px; margin: 11px 0 5px; height: 8px; }

.hint { display: flex; align-items: flex-start; gap: 1px; padding: 3px 3px 2px 2px; border-top: 1px solid #777; }
.hint .ic { width: 9px; height: 9px; }
.hint .ic.tiny { width: 7px; height: 7px; }
.hint p { flex: 1; line-height: 10px; }

.view { display: flex; flex-direction: column; flex: 1; min-width: 0; }
.toolbar { display: flex; align-self: flex-start; height: 16px; margin-left: 157px; background: #f0f0f0; border: 1px solid #bbb; border-top: 0; }
.toolbar button { width: 16px; }
.toolbar .dd { width: 15px; }
.toolbar .sep { width: 18px; border-right: 1px solid #bbb; }
.handle { width: 11px; border-right: 1px solid #bbb; background: radial-gradient(#777 1px, transparent 1px) 1px 2px / 3px 3px repeat-x; }
.scene { display: block; flex: 1; width: 100%; min-height: 0; }
.edge { fill: none; stroke: #333; stroke-width: 1; }
.thin { stroke: #555; stroke-width: .8; }
.edged { stroke: #3c3c3c; stroke-width: .8; }
.cyan { fill: none; stroke: #2fdede; stroke-width: 1.5; }
.blade { stroke: #e6c311; stroke-width: 1.5; }
.bladein { fill: none; stroke: #f0d23a; stroke-width: 1; }
.axes { font: 8px "Open Sans", sans-serif; }
```
